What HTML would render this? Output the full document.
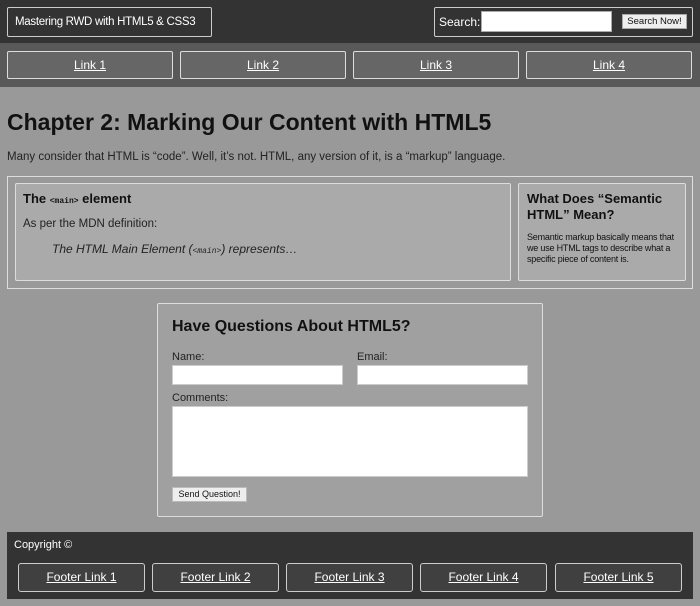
<!DOCTYPE html>
<html><head><style>
*{box-sizing:border-box;margin:0;padding:0}
body{width:700px;height:606px;background:#999;font-family:"Liberation Sans",Arial,sans-serif;color:#222;position:relative;overflow:hidden}
.a{position:absolute;white-space:nowrap}
.hdr{left:0;top:0;width:700px;height:43px;background:#333}
.box{border:1px solid #ccc;border-radius:2px}
.nav{left:0;top:43px;width:700px;height:44px;background:#595959}
.nl{background:#666;color:#fff;text-decoration:underline;font-size:12px;text-align:center;line-height:26px;height:28px;top:51px;border:1px solid #ddd;border-radius:2px}
.fl{background:#404040;color:#fff;text-decoration:underline;font-size:12px;text-align:center;line-height:26px;height:29px;top:563px;width:127px;border:1px solid #ccc;border-radius:3px}
code{font-family:"Liberation Mono",monospace;font-size:8px}
</style></head><body>
<div class="a hdr"></div>
<div class="a box" style="left:7px;top:7px;width:205px;height:30px;color:#fff;font-size:11.5px;letter-spacing:-0.3px;line-height:28px;padding-left:7px">Mastering RWD with HTML5 &amp; CSS3</div>
<div class="a box" style="left:434px;top:7px;width:259px;height:30px;color:#fff;font-size:12px;line-height:28px;padding-left:4px">Search:</div>
<div class="a" style="left:481px;top:11px;width:131px;height:21px;background:#fff;border:1px solid #aaa"></div>
<div class="a" style="left:622px;top:14px;width:65px;height:15px;background:#eee;border:1px solid #aaa;font-size:9.5px;text-align:center;line-height:13px;color:#111">Search Now!</div>
<div class="a nav"></div>
<div class="a nl" style="left:7px;width:166px">Link 1</div>
<div class="a nl" style="left:180px;width:166px">Link 2</div>
<div class="a nl" style="left:353px;width:166px">Link 3</div>
<div class="a nl" style="left:526px;width:166px">Link 4</div>
<div class="a" style="left:7px;top:109px;font-size:23px;font-weight:bold;color:#111">Chapter 2: Marking Our Content with HTML5</div>
<div class="a" style="left:7px;top:151px;font-size:11.5px;color:#222">Many consider that HTML is “code”. Well, it’s not. HTML, any version of it, is a “markup” language.</div>
<div class="a" style="left:7px;top:176px;width:686px;height:113px;border:1px solid #ddd"></div>
<div class="a" style="left:15px;top:183px;width:496px;height:98px;background:#aaa;border:1px solid #ddd;border-radius:2px"></div>
<div class="a" style="left:23px;top:191px;font-size:13px;font-weight:bold;color:#111">The <code>&lt;main&gt;</code> element</div>
<div class="a" style="left:23px;top:218px;font-size:11.5px;color:#222">As per the MDN definition:</div>
<div class="a" style="left:52px;top:242px;font-size:12px;font-style:italic;color:#222">The HTML Main Element (<code>&lt;main&gt;</code>) represents…</div>
<div class="a" style="left:518px;top:183px;width:168px;height:98px;background:#aaa;border:1px solid #ddd;border-radius:2px"></div>
<div class="a" style="left:527px;top:191px;width:155px;white-space:normal;font-size:13px;font-weight:bold;color:#111;line-height:16px">What Does “Semantic HTML” Mean?</div>
<div class="a" style="left:527px;top:232px;width:150px;white-space:normal;font-size:9px;line-height:11px;color:#111;letter-spacing:-0.2px">Semantic markup basically means that we use HTML tags to describe what a specific piece of content is.</div>
<div class="a" style="left:157px;top:303px;width:386px;height:214px;background:#a0a0a0;border:1px solid #ddd;border-radius:2px"></div>
<div class="a" style="left:172px;top:318px;font-size:16px;font-weight:bold;color:#111">Have Questions About HTML5?</div>
<div class="a" style="left:172px;top:351px;font-size:11px;color:#222">Name:</div>
<div class="a" style="left:357px;top:351px;font-size:11px;color:#222">Email:</div>
<div class="a" style="left:172px;top:365px;width:171px;height:20px;background:#fff;border:1px solid #ccc"></div>
<div class="a" style="left:357px;top:365px;width:171px;height:20px;background:#fff;border:1px solid #ccc"></div>
<div class="a" style="left:172px;top:392px;font-size:11px;color:#222">Comments:</div>
<div class="a" style="left:172px;top:406px;width:356px;height:71px;background:#fff;border:1px solid #ccc"></div>
<div class="a" style="left:172px;top:487px;width:75px;height:15px;background:#eee;border:1px solid #bbb;font-size:9px;text-align:center;line-height:13px;color:#111">Send Question!</div>
<div class="a" style="left:7px;top:532px;width:686px;height:67px;background:#333"></div>
<div class="a" style="left:14px;top:539px;font-size:11px;color:#fff">Copyright ©</div>
<div class="a fl" style="left:18px">Footer Link 1</div>
<div class="a fl" style="left:152px">Footer Link 2</div>
<div class="a fl" style="left:286px">Footer Link 3</div>
<div class="a fl" style="left:420px">Footer Link 4</div>
<div class="a fl" style="left:555px">Footer Link 5</div>
</body></html>
